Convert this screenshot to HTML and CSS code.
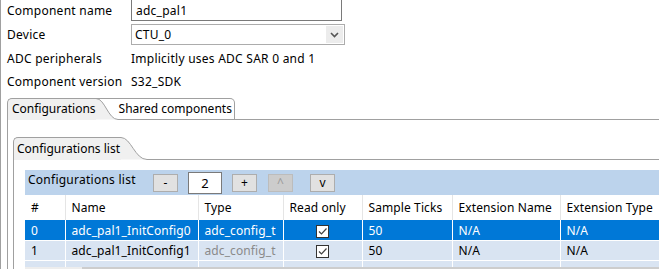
FILE: index.html
```html
<!DOCTYPE html>
<html>
<head>
  <title>adc_pal1</title>
  <link rel="stylesheet" href="styles.css">
</head>
<body>
<div class="frame">

  <div class="form">
    <label class="lbl">Component name</label>
    <input class="field name-field" type="text" value="adc_pal1">

    <label class="lbl">Device</label>
    <div class="combo">
      <span class="combo-text">CTU_0</span>
      <span class="combo-btn">
        <svg width="9" height="6" viewBox="0 0 9 6"><path d="M1 1 L4.5 4.5 L8 1" fill="none" stroke="#555" stroke-width="1.6"/></svg>
      </span>
    </div>

    <span class="lbl">ADC peripherals</span>
    <span class="val">Implicitly uses ADC SAR 0 and 1</span>

    <span class="lbl">Component version</span>
    <span class="val">S32_SDK</span>
  </div>

  <!-- outer tabs -->
  <div class="tabs outer-tabs">
    <div class="tab tab-sel">Configurations</div>
    <svg class="curve" width="22" height="22" viewBox="0 0 22 22">
      <path d="M0 0.5 C9 0.5 12 21.5 22 21.5 L0 21.5 Z" fill="#f0f0f0"/>
      <path d="M0 0.5 C9 0.5 12 21.5 22 21.5" fill="none" stroke="#a0a0a0"/>
      <path d="M0 0.5 H22" stroke="#a0a0a0"/>
    </svg>
    <div class="tab tab-other">Shared components</div>
    <div class="tab-rest"></div>
  </div>

  <div class="outer-body">
    <div class="inner">
      <div class="tabs inner-tabs">
        <div class="tab tab-sel">Configurations list</div>
        <svg class="curve" width="26" height="23" viewBox="0 0 26 23">
          <path d="M0 0.5 C10 0.5 14 22.5 26 22.5 L0 22.5 Z" fill="#f0f0f0"/>
          <path d="M0 0.5 C10 0.5 14 22.5 26 22.5" fill="none" stroke="#a0a0a0"/>
        </svg>
        <div class="tab-rest"></div>
      </div>

      <div class="inner-body">
        <div class="toolbar">
          <span class="tb-title">Configurations list</span>
          <button class="btn">-</button>
          <input class="count" type="text" value="2">
          <button class="btn">+</button>
          <button class="btn btn-off">^</button>
          <button class="btn btn-v">v</button>
        </div>

        <table class="grid">
          <colgroup>
            <col style="width:40px"><col style="width:133px"><col style="width:85px"><col style="width:79px">
            <col style="width:90px"><col style="width:108px"><col style="width:100px">
          </colgroup>
          <thead>
            <tr>
              <th>#</th><th>Name</th><th>Type</th><th>Read only</th>
              <th>Sample Ticks</th><th>Extension Name</th><th>Extension Type</th>
            </tr>
          </thead>
          <tbody>
            <tr class="row-sel">
              <td>0</td><td>adc_pal1_InitConfig0</td><td>adc_config_t</td>
              <td class="chk"><span class="box"><svg width="11" height="11" viewBox="0 0 11 11"><path d="M2 5.5 L4.5 8 L9.5 2.5" fill="none" stroke="#444" stroke-width="1.2"/></svg></span></td>
              <td>50</td><td>N/A</td><td>N/A</td>
            </tr>
            <tr class="row-alt">
              <td>1</td><td>adc_pal1_InitConfig1</td><td class="dim">adc_config_t</td>
              <td class="chk"><span class="box"><svg width="11" height="11" viewBox="0 0 11 11"><path d="M2 5.5 L4.5 8 L9.5 2.5" fill="none" stroke="#444" stroke-width="1.2"/></svg></span></td>
              <td>50</td><td>N/A</td><td>N/A</td>
            </tr>
            <tr class="row-alt row-cut">
              <td></td><td></td><td></td><td></td><td></td><td></td><td></td>
            </tr>
          </tbody>
        </table>
        <div class="hscroll"><div class="thumb"></div></div>
      </div>
    </div>
  </div>

</div>
</body>
</html>
```

FILE: styles.css
```css
body {
  margin: 0;
  font-family: "Noto Sans", sans-serif;
  font-size: 12px;
  letter-spacing: 0.25px;
  color: #000;
  background: #fff;
  overflow: hidden;
}

.frame {
  height: 269px;
  border-left: 1px solid #a0a0a0;
  overflow: hidden;
}

.form {
  display: grid;
  grid-template-columns: 124px 214px;
  grid-template-rows: 22px 21px 20px 20px;
  row-gap: 3px;
  align-items: center;
  padding-left: 6px;
  margin-top: -1px;
}

.lbl {
  white-space: nowrap;
}

.field {
  box-sizing: border-box;
  height: 22px;
  width: 211px;
  border: 1px solid #7a7a7a;
  font: inherit;
  letter-spacing: inherit;
  padding: 0 0 0 4px;
  margin: 0;
}

.combo {
  box-sizing: border-box;
  height: 21px;
  width: 214px;
  border: 1px solid #acacac;
  display: flex;
  align-items: center;
  padding: 1px 1px 1px 3px;
}

.combo-text {
  flex: 1;
}

.combo-btn {
  width: 17px;
  height: 17px;
  background: #ececec;
  display: flex;
  align-items: center;
  justify-content: center;
}

.val {
  white-space: nowrap;
}

/* tab folders */
.tabs {
  display: flex;
  align-items: stretch;
  letter-spacing: 0;
}

.outer-tabs {
  margin-top: 7px;
  margin-left: 6px;
  height: 22px;
}

.tab {
  box-sizing: border-box;
  white-space: nowrap;
  line-height: 20px;
}

.tab-sel {
  background: #f0f0f0;
  border-left: 1px solid #a0a0a0;
  border-top: 1px solid #a0a0a0;
  border-top-left-radius: 5px;
  padding-left: 4px;
}

.curve {
  display: block;
  flex: none;
}

.tab-other {
  border-top: 1px solid #a0a0a0;
  border-right: 1px solid #a0a0a0;
  border-bottom: 1px solid #a0a0a0;
  border-top-right-radius: 5px;
  padding-left: 1px;
  padding-right: 2px;
}

.tab-rest {
  flex: 1;
  border-bottom: 1px solid #a0a0a0;
}

.outer-body {
  margin-left: 6px;
  border-left: 1px solid #a0a0a0;
  height: 200px;
  padding-top: 17px;
  padding-left: 5px;
}

.inner-tabs {
  height: 23px;
}

.inner-tabs .tab-sel {
  line-height: 22px;
  padding-left: 3px;
  padding-right: 1px;
}

.inner-body {
  border-left: 1px solid #a0a0a0;
  padding-top: 10px;
  padding-left: 11px;
}

.toolbar {
  height: 25px;
  background: #bcd3ec;
  display: flex;
  align-items: flex-start;
}

.tb-title {
  width: 125px;
  padding-left: 3px;
  line-height: 20px;
  white-space: nowrap;
}

.btn {
  box-sizing: border-box;
  width: 25px;
  height: 18px;
  margin: 4px 0 0 0;
  padding: 0;
  border: 1px solid #adadad;
  background: #e1e1e1;
  font: inherit;
  line-height: 14px;
  color: #000;
}

.btn-off {
  background: #cccccc;
  border-color: #bcbcbc;
  color: #9a9a9a;
  margin-left: 11px;
}

.btn-v {
  margin-left: 17px;
}

.count {
  box-sizing: border-box;
  width: 34px;
  height: 22px;
  margin: 2px 10px 0 10px;
  border: 1px solid #7a7a7a;
  font: inherit;
  font-size: 13px;
  text-align: center;
  padding: 0;
}

.grid {
  border-collapse: collapse;
  table-layout: fixed;
  width: 635px;
  letter-spacing: 0.1px;
}

.grid th {
  height: 25px;
  padding: 0 0 0 6px;
  text-align: left;
  font-weight: normal;
  white-space: nowrap;
  border-left: 1px solid #e5e5e5;
  background: #fff;
}

.grid th:first-child {
  border-left: none;
}

.grid td {
  height: 19px;
  padding: 0 0 0 6px;
  white-space: nowrap;
  border-left: 1px solid #fff;
  border-top: 1px solid #fff;
}

.grid td:first-child {
  border-left: none;
}

.row-sel td {
  background: #0078d7;
  color: #fff;
  border-top: none;
  height: 20px;
}

.row-alt td {
  background: #d9e4f2;
}

.row-cut td {
  height: 6px;
}

.dim {
  color: #8a8a8a;
}

.chk {
  text-align: center;
}

.grid td.chk {
  padding: 0;
}

.box {
  display: inline-flex;
  box-sizing: border-box;
  width: 13px;
  height: 13px;
  border: 1px solid #333;
  background: #fff;
  vertical-align: middle;
  align-items: center;
  justify-content: center;
}

.hscroll {
  height: 8px;
  background: #ededed;
  padding-left: 57px;
}

.thumb {
  height: 8px;
  background: #cdcdcd;
}
```
